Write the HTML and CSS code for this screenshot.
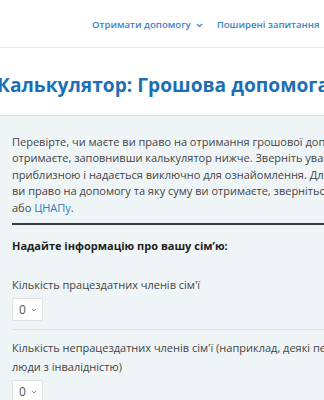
FILE: index.html
```html
<!DOCTYPE html>
<html lang="uk">
  <head>
    <meta charset="utf-8" />
    <meta name="viewport" content="width=device-width" />
    <title>Калькулятор: Грошова допомога</title>
    <link rel="stylesheet" href="styles.css">
  </head>

  <body>
    <header class="site-header">
      <nav class="main-nav">
        <a class="nav-link" href="#">Отримати допомогу
          <svg class="chev" width="7" height="5" viewBox="0 0 7 5"><path d="M1 1l2.5 2.5L6 1" fill="none" stroke="currentColor" stroke-width="1.2"/></svg>
        </a>
        <a class="nav-link" href="#">Поширені запитання
          <svg class="chev" width="7" height="5" viewBox="0 0 7 5"><path d="M1 1l2.5 2.5L6 1" fill="none" stroke="currentColor" stroke-width="1.2"/></svg>
        </a>
      </nav>
    </header>

    <main class="page">
      <h1 class="page-title">Калькулятор: Грошова допомога</h1>

      <section class="calc">
        <p class="intro">
          Перевірте, чи маєте ви право на отримання грошової допомоги, та яку суму ви<br>
          отримаєте, заповнивши калькулятор нижче. Зверніть увагу, що ця сума є<br>
          приблизною і надається виключно для ознайомлення. Для того, щоб дізнатися, чи маєте<br>
          ви право на допомогу та яку суму ви отримаєте, зверніться до органу соцзахисту<br>
          або <a href="#">ЦНАПу</a>.
        </p>

        <form class="calc-form">
          <h2 class="form-heading">Надайте інформацію про вашу сім’ю:</h2>

          <div class="field">
            <label for="able">Кількість працездатних членів сім'ї</label>
            <span class="select-wrap">
              <select id="able" name="able">
                <option>0</option>
                <option>1</option>
                <option>2</option>
              </select>
              <svg class="select-chev" width="6" height="4" viewBox="0 0 6 4"><path d="M1 1l2 2 2-2" fill="none" stroke="#8a8a8a" stroke-width="1"/></svg>
            </span>
          </div>

          <div class="field">
            <label for="unable">Кількість непрацездатних членів сім'ї (наприклад, деякі пенсіонери, діти,<br>люди з інвалідністю)</label>
            <span class="select-wrap">
              <select id="unable" name="unable">
                <option>0</option>
                <option>1</option>
                <option>2</option>
              </select>
              <svg class="select-chev" width="6" height="4" viewBox="0 0 6 4"><path d="M1 1l2 2 2-2" fill="none" stroke="#8a8a8a" stroke-width="1"/></svg>
            </span>
          </div>
        </form>
      </section>
    </main>
  </body>
</html>
```

FILE: styles.css
```css
body {
  margin: 0;
  font-family: "Open Sans", "Noto Sans", sans-serif;
  color: #444;
  background: #fff;
  overflow: hidden;
}

/* header */
.site-header {
  height: 47px;
  border-bottom: 1px solid #f2ead2;
  display: flex;
  align-items: center;
}

.main-nav {
  display: flex;
  gap: 14px;
  padding-left: 92px;
  padding-top: 2px;
}

.nav-link {
  display: flex;
  align-items: center;
  gap: 5px;
  white-space: nowrap;
  font-size: 9.6px;
  font-weight: 600;
  color: #3b83c0;
  text-decoration: none;
}

.chev {
  margin-top: 1px;
}

/* title */
.page-title {
  margin: 24px 0 17px -3px;
  font-size: 19.2px;
  line-height: 26px;
  font-weight: 700;
  color: #1c6fb4;
  white-space: nowrap;
}

/* calculator box */
.calc {
  width: 560px;
  background: #eff5f7;
  border-top: 1px solid #d3e5eb;
  padding: 18px 12px 20px;
}

.intro {
  margin: 0;
  padding-bottom: 7px;
  border-bottom: 2px solid #3a3a3a;
  font-size: 11px;
  line-height: 16.4px;
  white-space: nowrap;
}

.intro a {
  color: #2a7fc2;
  text-decoration: none;
}

.form-heading {
  margin: 13px 0 0;
  font-size: 11px;
  line-height: 16.4px;
  font-weight: 700;
  color: #222;
}

.field {
  padding: 21px 0 8px;
  border-bottom: 1px solid #dde4e6;
}

.field + .field {
  padding-top: 8px;
}

.field label {
  display: block;
  font-size: 11px;
  line-height: 19px;
  white-space: nowrap;
  margin-bottom: 3px;
}

.select-wrap {
  position: relative;
  display: inline-block;
}

.select-wrap select {
  appearance: none;
  display: block;
  width: 31px;
  height: 23px;
  margin: 0;
  padding: 0 0 0 6px;
  border: 1px solid #e2e2e2;
  border-radius: 2px;
  background: #fff;
  font-family: inherit;
  font-size: 12px;
  color: #555;
}

.select-chev {
  position: absolute;
  right: 6px;
  top: 10px;
  pointer-events: none;
}
```
